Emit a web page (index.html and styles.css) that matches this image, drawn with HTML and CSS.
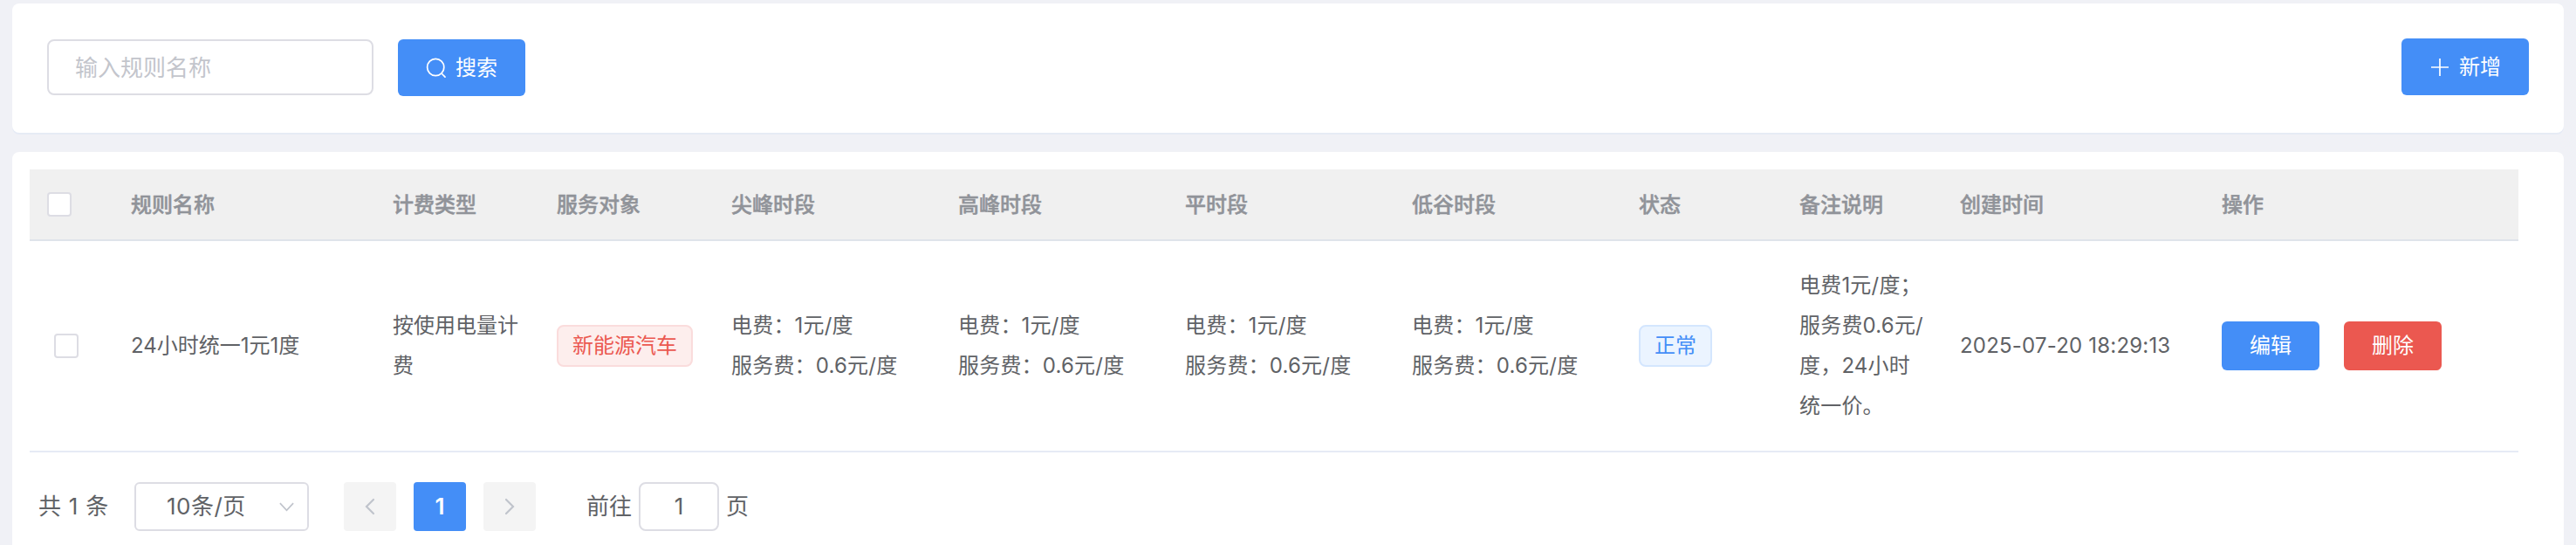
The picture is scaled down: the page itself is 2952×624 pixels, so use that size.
FILE: index.html
```html
<!DOCTYPE html>
<html lang="zh-CN">
<head>
<meta charset="utf-8">
<title>计费规则</title>
<link rel="stylesheet" href="styles.css">
</head>
<body>
<section class="card toolbar">
  <div class="search">
    <input class="search-input" type="text" placeholder="输入规则名称">
    <button class="btn btn-lg primary">
      <svg class="icon" viewBox="0 0 24 24"><circle cx="11.2" cy="11" r="9.6"/><path d="M18 18l4 4.2"/></svg>
      <span>搜索</span>
    </button>
  </div>
  <button class="btn btn-lg primary btn-add">
    <svg class="icon plus" viewBox="0 0 24 24"><path d="M2 12h20M12 2v20"/></svg>
    <span>新增</span>
  </button>
</section>
<section class="card content">
  <div class="table">
    <div class="row head">
      <div class="cell check"><span class="checkbox"></span></div>
      <div class="cell">规则名称</div>
      <div class="cell">计费类型</div>
      <div class="cell">服务对象</div>
      <div class="cell">尖峰时段</div>
      <div class="cell">高峰时段</div>
      <div class="cell">平时段</div>
      <div class="cell">低谷时段</div>
      <div class="cell">状态</div>
      <div class="cell">备注说明</div>
      <div class="cell">创建时间</div>
      <div class="cell">操作</div>
    </div>
    <div class="row body">
      <div class="cell check"><span class="checkbox"></span></div>
      <div class="cell">24小时统一1元1度</div>
      <div class="cell">按使用电量计费</div>
      <div class="cell"><span class="tag danger-tag">新能源汽车</span></div>
      <div class="cell price"><div>电费：1元/度<br>服务费：0.6元/度</div></div>
      <div class="cell price"><div>电费：1元/度<br>服务费：0.6元/度</div></div>
      <div class="cell price"><div>电费：1元/度<br>服务费：0.6元/度</div></div>
      <div class="cell price"><div>电费：1元/度<br>服务费：0.6元/度</div></div>
      <div class="cell"><span class="tag primary-tag">正常</span></div>
      <div class="cell remark"><div>电费1元/度；<br>服务费0.6元/<br>度，24小时<br>统一价。</div></div>
      <div class="cell time">2025-07-20 18:29:13</div>
      <div class="cell actions"><button class="btn btn-sm primary">编辑</button><button class="btn btn-sm danger">删除</button></div>
    </div>
  </div>
  <div class="pagination">
    <span class="total">共 1 条</span>
    <div class="page-size"><span>10条/页</span><svg class="caret" viewBox="0 0 20 12"><path d="M2 2l8 8.5L18 2"/></svg></div>
    <div class="pager">
      <button class="page"><svg class="arrow" viewBox="0 0 12 20"><path d="M10 2L2 10l8 8"/></svg></button>
      <button class="page current">1</button>
      <button class="page"><svg class="arrow" viewBox="0 0 12 20"><path d="M2 2l8 8-8 8"/></svg></button>
    </div>
    <div class="jump"><span>前往</span><input class="jump-input" type="text" value="1"><span>页</span></div>
  </div>
</section>
</body>
</html>
```
FILE: styles.css
```css
* { box-sizing: border-box; }
body {
  margin: 0;
  padding: 4px 14px 0;
  height: 624px;
  overflow: hidden;
  background: #f0f1f6;
  color: #606266;
  font-family: Inter, "Noto Sans CJK SC", sans-serif;
  font-size: 24px;
}
button, input { font: inherit; margin: 0; }
.card { background: #fff; border-radius: 8px; box-shadow: 0 2px 0 #e6ebf5; }
.toolbar {
  display: flex;
  justify-content: space-between;
  height: 148px;
  padding: 40px 40px 0;
}
.search { display: flex; gap: 28px; padding-top: 1px; align-items: flex-start; }
.search-input {
  width: 374px;
  height: 64px;
  padding: 0 30px;
  border: 2px solid #dddde4;
  border-radius: 8px;
  color: #606266;
  font-size: 26px;
  outline: 0;
}
.search-input::placeholder { color: #c3c5cc; opacity: 1; }
.btn {
  display: flex;
  align-items: center;
  justify-content: center;
  border: 0;
  border-radius: 6px;
  color: #fff;
  line-height: 1;
}
.btn-lg { width: 146px; height: 65px; gap: 10px; }
.btn-sm { width: 112px; height: 56px; padding: 0; }
.primary { background: #448ef7; }
.danger { background: #eb5850; }
.icon { width: 24px; height: 24px; fill: none; stroke: #fff; stroke-width: 1.7; stroke-linecap: round; }
.plus { stroke-linecap: butt; }
.content { height: 480px; margin-top: 22px; padding: 20px; }
.table { width: 2852px; }
.row {
  display: grid;
  grid-template-columns: 96px 300px 188px 200px repeat(4, 260px) 184px 184px 300px 360px;
}
.head {
  height: 82px;
  background: #f0f0f0;
  border-bottom: 2px solid #dfe4ea;
  color: #909399;
  font-weight: 500;
  -webkit-text-stroke: 0.5px #909399;
}
.body { height: 242px; border-bottom: 2px solid #e6ebf5; line-height: 46px; }
.cell { display: flex; align-items: center; padding: 0 20px; }
.head .cell { padding-bottom: 3px; }
.head .check { padding-bottom: 0; }
.price, .time { letter-spacing: 0.2px; }
.remark { white-space: nowrap; letter-spacing: 0.2px; }
.body .check { padding-left: 28px; }
.checkbox {
  width: 28px;
  height: 28px;
  background: #fff;
  border: 2px solid #dddde4;
  border-radius: 4px;
}
.tag { height: 48px; padding: 0 16px; border: 2px solid; border-radius: 8px; line-height: 44px; white-space: nowrap; }
.danger-tag { color: #eb5850; background: #fdeeed; border-color: #fadcdc; }
.primary-tag { color: #448ef7; background: #ebf4ff; border-color: #d4e6fe; }
.actions { gap: 28px; }
.pagination {
  display: flex;
  align-items: center;
  margin-top: 34px;
  padding-left: 10px;
  height: 56px;
  font-size: 26px;
  line-height: 56px;
}
.total { width: 110px; white-space: nowrap; word-spacing: 1.5px; }
.page-size {
  display: flex;
  align-items: center;
  justify-content: space-between;
  width: 200px;
  height: 56px;
  padding: 0 14px 0 35px;
  border: 2px solid #dddde4;
  border-radius: 6px;
  letter-spacing: 0.5px;
}
.caret { width: 19px; height: 12px; fill: none; stroke: #c0c4cc; stroke-width: 1.8; }
.pager { display: flex; gap: 20px; margin-left: 40px; }
.page {
  display: flex;
  align-items: center;
  justify-content: center;
  width: 60px;
  height: 56px;
  padding: 0;
  border: 0;
  border-radius: 4px;
  background: #f4f4f4;
}
.current { background: #448ef7; color: #fff; font-weight: 600; }
.arrow { width: 12px; height: 20px; fill: none; stroke: #c0c4cc; stroke-width: 2.2; stroke-linecap: round; }
.jump { display: flex; align-items: center; gap: 8px; margin-left: 58px; }
.jump-input {
  width: 92px;
  height: 56px;
  padding: 0;
  border: 2px solid #dddde4;
  border-radius: 8px;
  color: #606266;
  text-align: center;
}
```
